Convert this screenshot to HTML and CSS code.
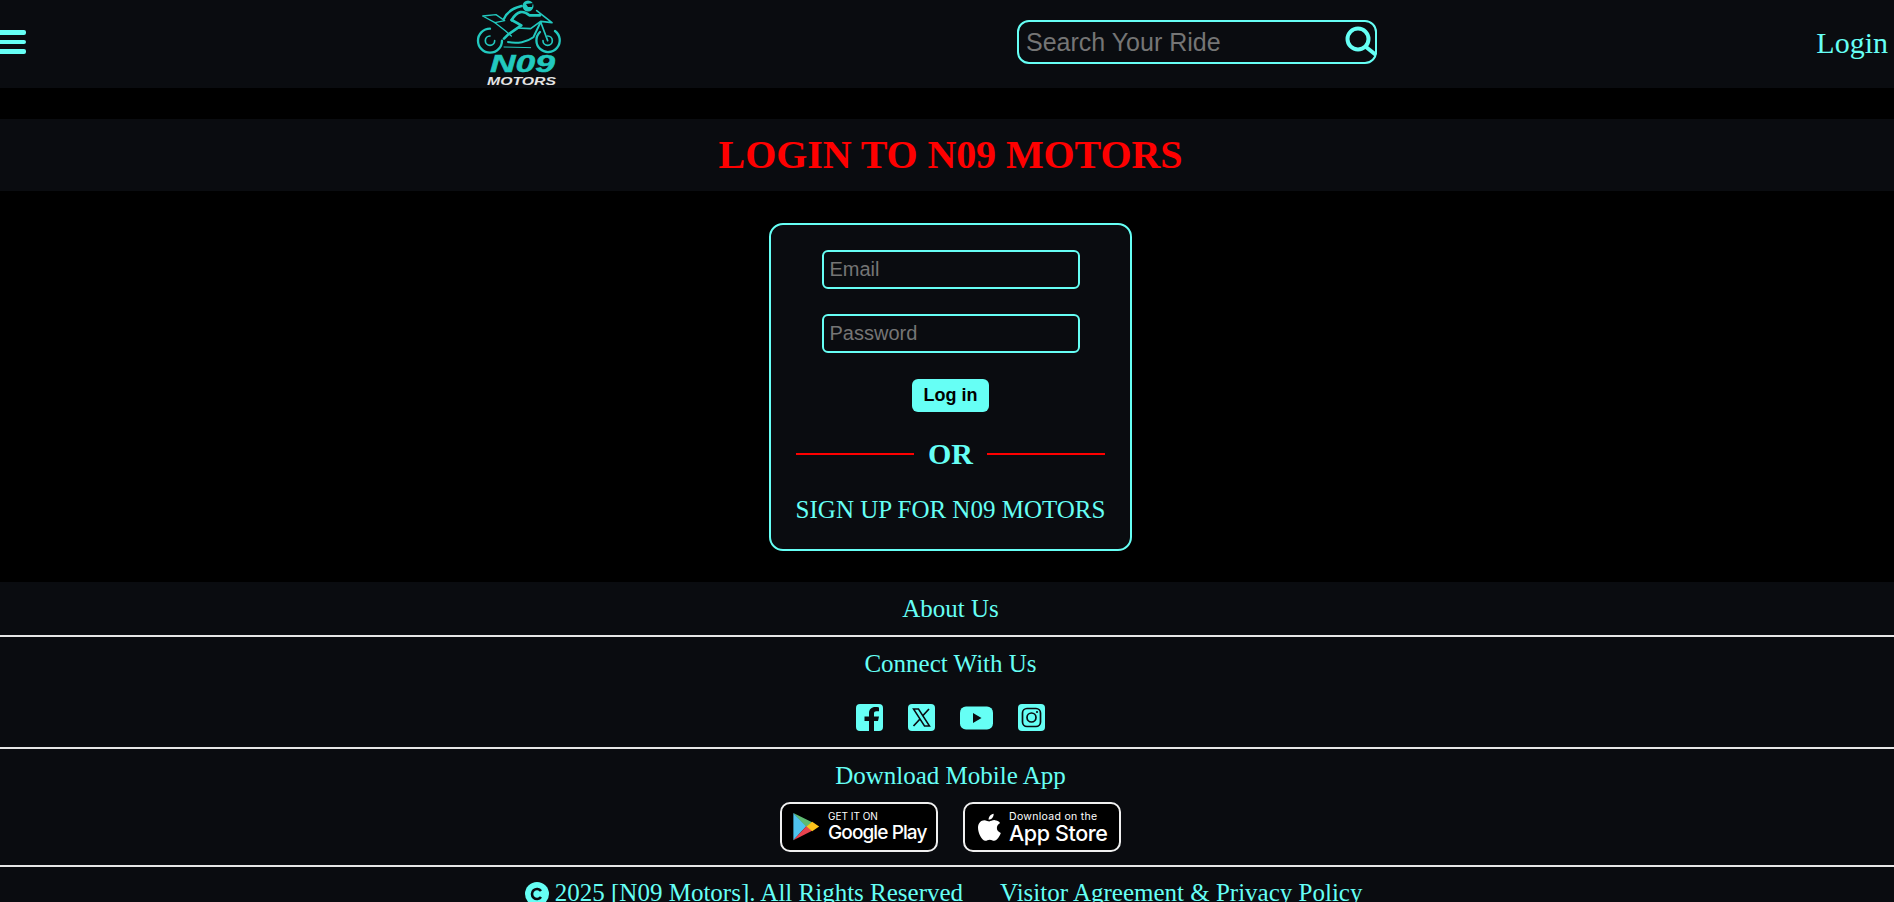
FILE: index.html
```html
<!DOCTYPE html>
<html lang="en">
<head>
    <meta charset="UTF-8">
    <meta name="viewport" content="width=device-width, initial-scale=1.0">
    <title>Login - N09 Motors</title>
    <link rel="stylesheet" href="styles.css">
</head>
<body>
    <header class="top-bar">
        <div class="menu-icon"><span></span><span></span><span></span></div>
        <a class="logo" href="#">
            <svg width="90" height="88" viewBox="35 0 90 88">
                <g transform="scale(.3333)" fill="none" stroke="#22c9bf" stroke-linecap="round" stroke-linejoin="round">
                    <path d="M150 86 A36 36 0 1 0 186 122" stroke-width="7"/>
                    <path d="M150 108 A14 14 0 1 0 164 122" stroke-width="5"/>
                    <path d="M345 93 A35 35 0 1 1 300 96" stroke-width="7"/>
                    <path d="M323 108 A14 14 0 1 1 309 122" stroke-width="5"/>
                    <path d="M128 48 L168 44 L194 62 L165 68 Z" stroke-width="4"/>
                    <path d="M165 68 L196 92 L214 108" stroke-width="4"/>
                    <path d="M192 56 C200 38 220 24 245 18" stroke-width="7"/>
                    <path d="M215 60 C232 32 250 30 268 46 L300 46" stroke-width="8"/>
                    <path d="M215 60 L244 76 L204 104 L192 116" stroke-width="8"/>
                    <path d="M290 32 L336 68 L302 64 L272 86 L232 84" stroke-width="5"/>
                    <path d="M204 126 C232 132 262 126 280 112 L302 66" stroke-width="6"/>
                    <path d="M302 66 L323 122" stroke-width="5"/>
                    <path d="M192 141 L272 143" stroke-width="3"/>
                </g>
                <circle cx="88" cy="6" r="5.5" fill="#22c9bf"/>
                <path d="M86 4 L93 3 L92 7 L88 7 Z" fill="#0a0c10"/>
                <text class="logo-big" x="50" y="72" textLength="65" lengthAdjust="spacingAndGlyphs">N09</text>
                <text class="logo-small" x="47" y="85" textLength="69" lengthAdjust="spacingAndGlyphs">MOTORS</text>
            </svg>
        </a>
        <form class="search-box">
            <input type="text" placeholder="Search Your Ride">
            <svg class="search-icon" width="32" height="32" viewBox="0 0 32 32">
                <circle cx="13" cy="13" r="10.500" fill="none" stroke="#66fff5" stroke-width="4"/>
                <path d="M21 21 L31 29" stroke="#66fff5" stroke-width="4"/>
            </svg>
        </form>
        <a class="login-link" href="#">Login</a>
    </header>

    <main>
        <h1 class="page-title">LOGIN TO N09 MOTORS</h1>
        <div class="login-card">
            <input class="field" type="email" placeholder="Email">
            <input class="field" type="password" placeholder="Password">
            <button class="login-btn" type="button">Log in</button>
            <div class="divider"><span>OR</span></div>
            <a class="signup-link" href="#">SIGN UP FOR N09 MOTORS</a>
        </div>
    </main>

    <footer>
        <div class="foot-row about-row"><a href="#">About Us</a></div>
        <div class="foot-row connect-row">
            <a href="#">Connect With Us</a>
            <div class="social">
                <svg width="27" height="27" viewBox="0 0 27 27">
                    <path fill="#66fff5" fill-rule="evenodd" d="M4 0 H23 A4 4 0 0 1 27 4 V23 A4 4 0 0 1 23 27 H18 V17 H22 L23 12.500 H18 V9.500 C18 8 18.800 7.200 20.300 7.200 H23 V3.400 C21.800 3.200 20.600 3 19.400 3 C15.400 3 13 5.400 13 9.200 V12.500 H8.500 V17 H13 V27 H4 A4 4 0 0 1 0 23 V4 A4 4 0 0 1 4 0 Z"/>
                </svg>
                <svg width="27" height="27" viewBox="0 0 27 27">
                    <rect width="27" height="27" rx="4" fill="#66fff5"/>
                    <path d="M5.500 5 H10.500 L21.500 22 H16.500 Z" fill="none" stroke="#0a0c10" stroke-width="1.500"/>
                    <path d="M21 5 L14.500 12 M12 15 L5.500 22" stroke="#0a0c10" stroke-width="1.700"/>
                </svg>
                <svg width="33" height="24" viewBox="0 0 33 24">
                    <rect width="33" height="23" y="0.500" rx="6" fill="#66fff5"/>
                    <path d="M13 7 L21.500 12 L13 17 Z" fill="#0a0c10"/>
                </svg>
                <svg width="27" height="27" viewBox="0 0 27 27">
                    <rect width="27" height="27" rx="4" fill="#66fff5"/>
                    <rect x="4.500" y="4.500" width="18" height="18" rx="4.500" fill="none" stroke="#0a0c10" stroke-width="1.700"/>
                    <circle cx="13.500" cy="13.500" r="4.500" fill="none" stroke="#0a0c10" stroke-width="1.700"/>
                    <circle cx="19" cy="8" r="1.100" fill="#0a0c10"/>
                </svg>
            </div>
        </div>
        <div class="foot-row download-row">
            <a href="#">Download Mobile App</a>
            <div class="badges">
                <a class="badge" href="#">
                    <svg width="27" height="30" viewBox="0 0 28 32">
                        <path d="M0 1 L14 15 L0 30 Z" fill="#4fc3ef"/>
                        <path d="M0 1 L20 11 L14 16 Z" fill="#5fbb72"/>
                        <path d="M0 30 L20 20 L14 15 Z" fill="#e8434f"/>
                        <path d="M20 10.500 L27.500 15.500 L20 20.500 L14 15.500 Z" fill="#fcc31a"/>
                    </svg>
                    <span class="badge-text"><small>GET IT ON</small><b class="gp">Google Play</b></span>
                </a>
                <a class="badge store" href="#">
                    <svg width="23" height="29" viewBox="0 0 25 30">
                        <path fill="#fff" d="M17 0 C17.300 3.600 14.500 6.600 11.600 6.500 C11.200 3.400 14 .4 17 0 Z M20.500 15.600 C20.500 12.800 22 11.200 24 10 C22.700 8 20.500 7 18.300 7 C15.800 6.800 13.600 8.400 12.300 8.400 C11 8.400 9 7 6.800 7 C3.500 7.100 0 9.800 0 15 C0 21 4.300 29.500 8 29.500 C9.700 29.500 10.600 28.300 12.800 28.300 C15 28.300 15.700 29.500 17.500 29.500 C20.800 29.500 23.600 24 24.800 21 C22.200 19.900 20.500 18.300 20.500 15.600 Z"/>
                    </svg>
                    <span class="badge-text"><small class="wide">Download on the</small><b>App Store</b></span>
                </a>
            </div>
        </div>
        <div class="copy-row">
            <span class="copy-left">
                <svg width="24" height="24" viewBox="0 0 24 24">
                    <circle cx="12" cy="12" r="12" fill="#66fff5"/>
                    <path d="M16 9 A5 5 0 1 0 16 15" fill="none" stroke="#0a0c10" stroke-width="2.600"/>
                </svg>
                2025 [N09 Motors]. All Rights Reserved
            </span>
            <a href="#">Visitor Agreement &amp; Privacy Policy</a>
        </div>
    </footer>
</body>
</html>
```

FILE: styles.css
```css
* { box-sizing: border-box; }
html, body { height: 100%; }
body {
    margin: 0;
    background: #000;
    font-family: 'Liberation Serif', serif;
    color: #66fff5;
    font-size: 25px;
    overflow: hidden;
}
a {
    color: #66fff5;
    text-decoration: none;
}
.top-bar {
    height: 88px;
    background: #0a0c10;
    display: flex;
    align-items: center;
    padding-right: 6px;
}
.menu-icon {
    width: 26px;
    display: flex;
    flex-direction: column;
    gap: 5px;
    margin-bottom: 4px;
}
.menu-icon span {
    display: block;
    height: 4.5px;
    background: #66fff5;
    border-radius: 0 2px 2px 0;
}
.logo {
    display: block;
    height: 88px;
    margin-left: 449px;
}
.logo-big {
    font-family: 'Liberation Sans', sans-serif;
    font-weight: 700;
    font-style: italic;
    font-size: 24px;
    fill: #22c9bf;
    stroke: #22c9bf;
    stroke-width: .5px;
}
.logo-small {
    font-family: 'Liberation Sans', sans-serif;
    font-weight: 700;
    font-style: italic;
    font-size: 11px;
    fill: #e4e4e4;
}
.search-box {
    width: 360px;
    height: 44px;
    margin: 0 0 4px 452px;
    border: 2px solid #66fff5;
    border-radius: 12px;
    display: flex;
    align-items: center;
    padding-left: 7px;
}
.search-box input {
    flex: 1;
    min-width: 0;
    background: none;
    border: none;
    outline: none;
    padding: 0;
    font-family: 'Liberation Sans', sans-serif;
    font-size: 25px;
    color: #fff;
}
.search-box input::placeholder,
.field::placeholder { color: #757575; opacity: 1; }
.search-icon { margin: 0 -2px 0 0; }
.login-link {
    font-size: 30px;
    margin: 0 0 2px auto;
}

.page-title {
    margin: 31px 0 0 0;
    height: 72px;
    line-height: 72px;
    padding-left: 7px;
    background: #0a0c10;
    color: #f00;
    font-size: 40px;
    font-weight: 700;
    letter-spacing: -.1px;
    text-align: center;
}
.login-card {
    width: 363px;
    height: 328px;
    margin: 32px 0 31px calc(50% - 178px);
    padding: 25px 25px 0 25px;
    background: #0a0c10;
    border: 2px solid #66fff5;
    border-radius: 14px;
    display: flex;
    flex-direction: column;
    align-items: center;
}
.field {
    width: 258px;
    height: 39px;
    margin-bottom: 25px;
    padding: 0 6px;
    background: none;
    border: 2px solid #66fff5;
    border-radius: 6px;
    outline: none;
    font-family: 'Liberation Sans', sans-serif;
    font-size: 20px;
    color: #fff;
}
.login-btn {
    width: 77px;
    height: 33px;
    margin-top: 1px;
    padding: 0;
    background: #66fff5;
    border: none;
    border-radius: 6px;
    font-family: 'Liberation Sans', sans-serif;
    font-size: 18px;
    font-weight: 700;
    color: #000;
}
.divider {
    width: 309px;
    margin-top: 25px;
    display: flex;
    align-items: center;
    gap: 14px;
    font-size: 30px;
    font-weight: 700;
}
.divider::before,
.divider::after {
    content: "";
    flex: 1;
    height: 2px;
    background: #f00;
}
.signup-link { margin-top: 25px; white-space: nowrap; }

footer { background: #0a0c10; }
.foot-row {
    padding-left: 7px;
    border-bottom: 2px solid #e6e6e6;
    text-align: center;
}
.about-row { height: 55px; padding-top: 13px; }
.connect-row { height: 112px; padding-top: 13px; }
.download-row { height: 118px; padding-top: 13px; }
.social {
    margin-top: 26px;
    display: flex;
    justify-content: center;
    align-items: center;
    gap: 25px;
}
.badges {
    margin-top: 12px;
    display: flex;
    justify-content: center;
    gap: 25px;
}
.badge {
    width: 158px;
    height: 50px;
    background: #000;
    border: 2px solid #f0f0f0;
    border-radius: 10px;
    display: flex;
    align-items: center;
    gap: 8px;
    padding-left: 11px;
    color: #fff;
    text-align: left;
}
.badge.store { padding-left: 13px; }
.badge-text {
    display: flex;
    flex-direction: column;
    font-family: 'Inter', sans-serif;
}
.badge-text small {
    font-size: 10px;
    line-height: 11px;
    font-weight: 400;
}
.badge-text small.wide { font-size: 10.5px; letter-spacing: .3px; }
.badge-text b {
    font-size: 21.5px;
    line-height: 22px;
    font-weight: 500;
    letter-spacing: -.4px;
    white-space: nowrap;
}
.badge-text b.gp {
    font-size: 19px;
    letter-spacing: -.9px;
}
.copy-row {
    display: flex;
    justify-content: center;
    gap: 37px;
    padding: 12px 7px 0 0;
    white-space: nowrap;
}
.copy-left svg { vertical-align: -5px; }
```
